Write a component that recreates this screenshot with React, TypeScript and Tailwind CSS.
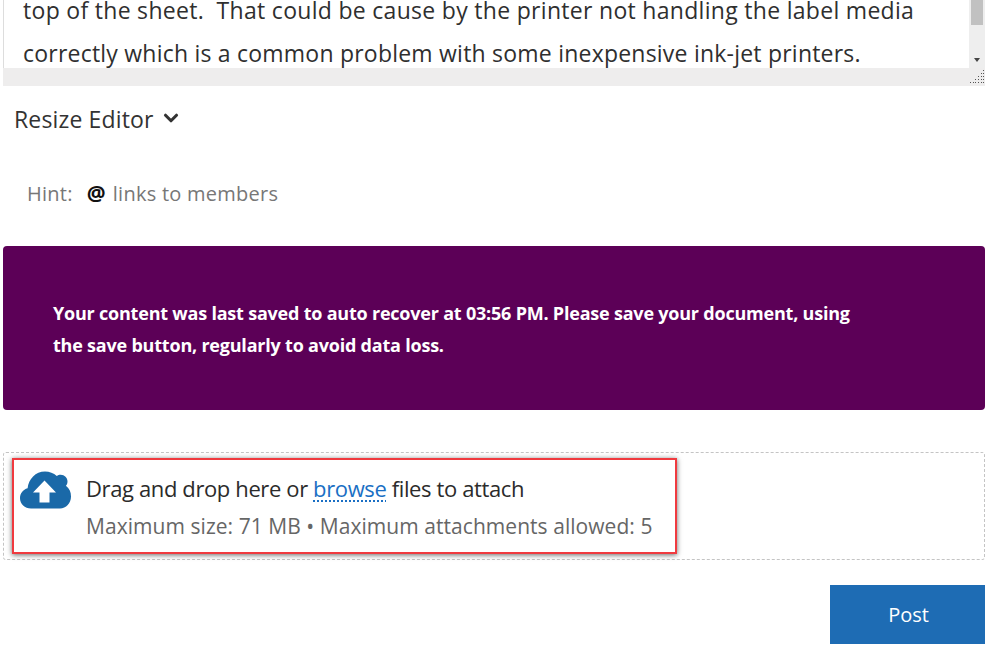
import { ChevronDown } from "lucide-react";

function CloudUpload() {
  return (
    <svg width="52" height="38" viewBox="0 0 52 38" className="shrink-0">
      <path
        d="M11 37.500C4.800 37.500 0 33 0 27.200c0-4.700 3-8.600 7.600-9.900C8.500 8 15.600 0.500 25 0.500c4.500 0 8.600 1.700 11.800 4.500 1-.8 2.400-1.300 3.900-1.300 3.800 0 6.800 3 6.800 6.700 0 1.700-.6 3.200-1.600 4.400C49.500 17.400 51 21 51 25.500c0 6.800-5 12-11 12z"
        fill="#1a69a8"
      />
      <path d="M24.500 9.500L36 21.500H29.500V31.500H19.500V21.500H13z" fill="#ffffff" />
    </svg>
  );
}

export default function App() {
  return (
    <div className="h-[647px] w-[999px] overflow-hidden bg-white pl-[3px] pr-[14px] font-['Open_Sans',sans-serif] text-[#333333]">
      {/* Editor tail */}
      <div className="h-[86px] overflow-hidden bg-[#eeeded]">
        <div className="flex h-[68px]">
          <div className="flex-1 overflow-hidden border-l-[1px] border-[#dddddd] bg-white pl-[19px]">
            <div className="-mt-[11px] whitespace-pre text-[23px] leading-[42.500px] text-[#2f2f2f]">
              <div className="tracking-[0.3px]">top of the sheet.  That could be cause by the printer not handling the label media</div>
              <div className="tracking-[0.22px]">correctly which is a common problem with some inexpensive ink-jet printers.</div>
            </div>
          </div>
          <div className="flex w-[16px] flex-col items-center justify-between bg-[#eeeeee]">
            <div className="h-[25px] w-[12px] bg-[#c1c1c1]" />
            <div className="mb-[6px] h-0 w-0 border-x-[3px] border-t-[4px] border-x-transparent border-t-[#444444]" />
          </div>
        </div>
        <div className="flex h-[18px] items-end justify-end">
          <svg width="16" height="16" viewBox="0 0 16 16" className="mb-[1px]">
            <g fill="#555555">
              <rect x="14" y="1" width="1" height="1" />
              <rect x="12" y="4" width="1" height="1" /><rect x="14" y="4" width="1" height="1" />
              <rect x="9" y="7" width="1" height="1" /><rect x="12" y="7" width="1" height="1" /><rect x="14" y="7" width="1" height="1" />
              <rect x="6" y="10" width="1" height="1" /><rect x="9" y="10" width="1" height="1" /><rect x="12" y="10" width="1" height="1" /><rect x="14" y="10" width="1" height="1" />
              <rect x="1" y="13" width="1" height="1" /><rect x="4" y="13" width="1" height="1" /><rect x="6" y="13" width="1" height="1" /><rect x="9" y="13" width="1" height="1" /><rect x="12" y="13" width="1" height="1" /><rect x="14" y="13" width="1" height="1" />
            </g>
          </svg>
        </div>
      </div>

      {/* Resize */}
      <div className="mt-[16px] flex h-[34px] items-center gap-[7px] pl-[11px] text-[23px] tracking-[0.15px] text-[#333333]">
        <span>Resize Editor</span>
        <ChevronDown size={22} strokeWidth={3.4} className="mt-[-2px] -ml-[1px]" />
      </div>

      {/* Hint */}
      <div className="mt-[41px] flex h-[34px] items-center pl-[24px] text-[20px] tracking-[0.25px] text-[#777777]">
        <span>Hint:</span>
        <b className="ml-[14px] mr-[7px] text-[21px] text-[#111111]">@</b>
        <span>links to members</span>
      </div>

      {/* Auto recover notice */}
      <div className="mt-[35px] h-[164px] rounded-[4px] bg-[#5c0057] pl-[50px] pt-[51px] text-[18px] leading-[32px] font-bold tracking-[-0.21px] text-white">
        <div>Your content was last saved to auto recover at 03:56 PM. Please save your document, using</div>
        <div>the save button, regularly to avoid data loss.</div>
      </div>

      {/* Attachments */}
      <div className="mt-[42px] h-[108px] rounded-[3px] border border-dashed border-[#c4c4c4] pl-[8px] pt-[5px]">
        <div className="flex h-[96px] w-[665px] items-start gap-[14px] border-[2px] border-[#f03a3f] bg-white pl-[6px] pt-[10px] shadow-[0_1px_5px_rgba(0,0,0,0.6)]">
          <div className="pt-[1px]"><CloudUpload /></div>
          <div>
            <div className="h-[36px] text-[22px] leading-[36px] font-medium tracking-[-0.38px] text-[#2b2b2b]">
              Drag and drop here or{" "}
              <span className="text-[#1a6fc4] underline decoration-dotted decoration-[2px] underline-offset-[3px]">browse</span>{" "}
              files to attach
            </div>
            <div className="mt-[2px] text-[21px] leading-[36px] font-medium tracking-[0.05px] text-[#666666]">
              Maximum size: 71 MB • Maximum attachments allowed: 5
            </div>
          </div>
        </div>
      </div>

      {/* Actions */}
      <div className="mt-[25px] flex justify-end">
        <button className="h-[59px] w-[155px] bg-[#1e6cb4] pl-[2px] pt-[1px] text-[20px] text-white">Post</button>
      </div>
    </div>
  );
}
